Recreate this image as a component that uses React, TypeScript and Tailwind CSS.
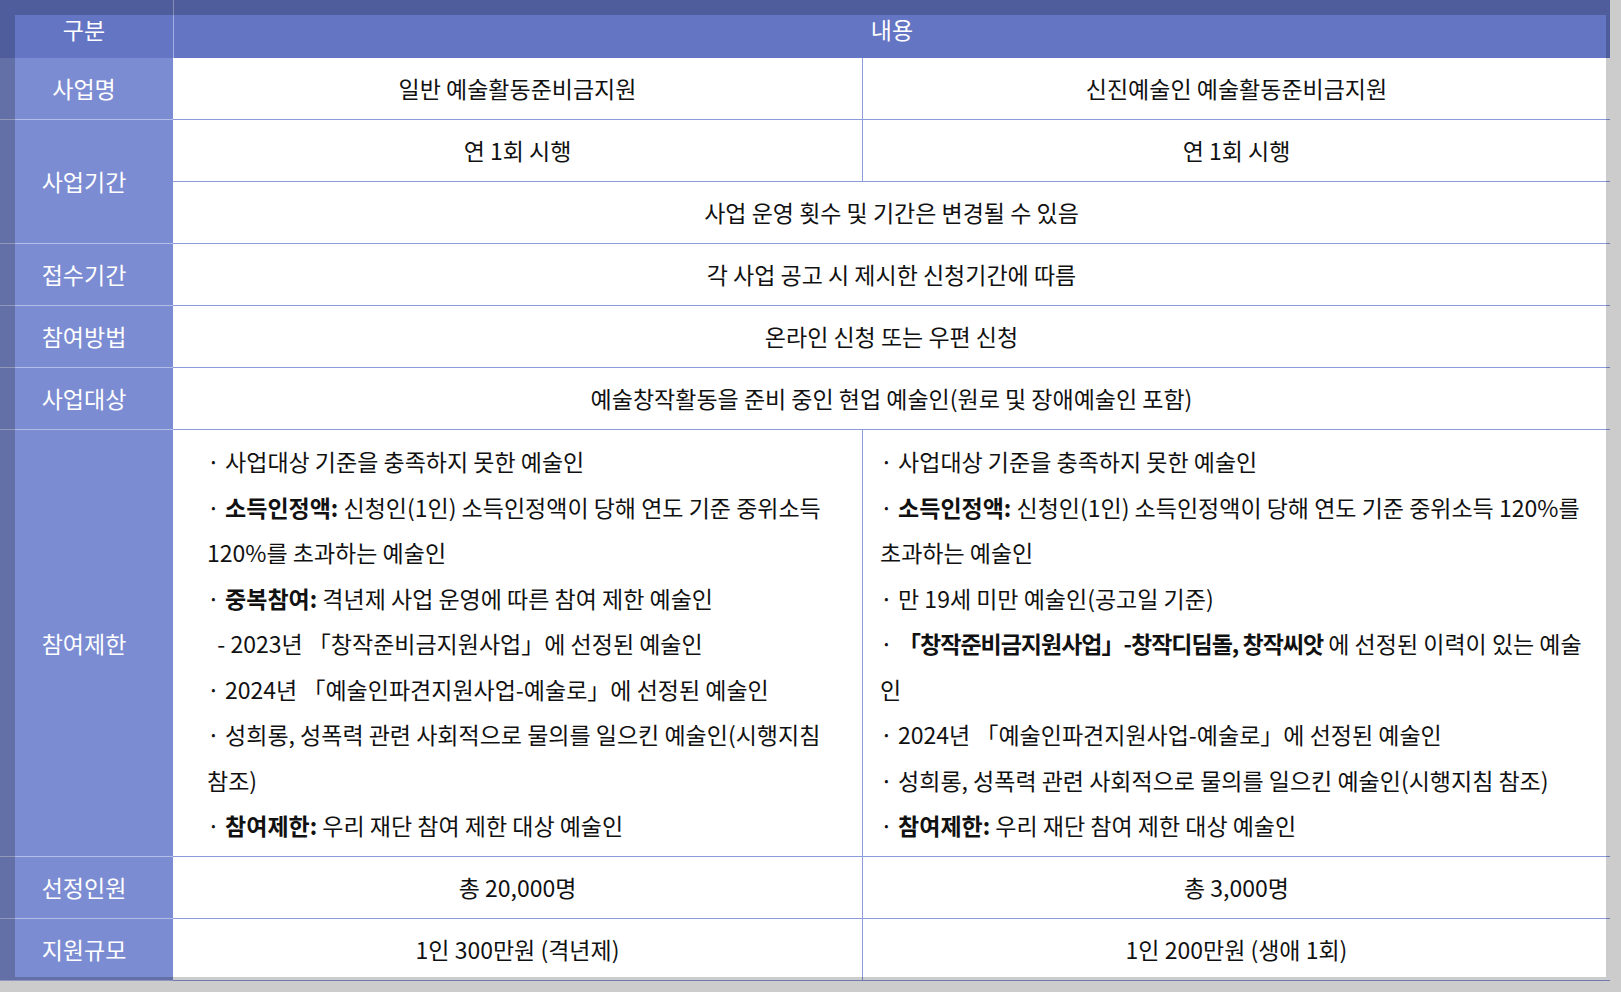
import React from "react";

const LINE = "border-[#8c9bdb]";

function Label({ children, className = "" }: { children: React.ReactNode; className?: string }) {
  return (
    <div
      className={`flex items-center justify-center border-b border-[#b4bdea] bg-[#7c8cd2] pr-[5px] text-white ${className}`}
    >
      {children}
    </div>
  );
}

function Cell({ children, className = "" }: { children: React.ReactNode; className?: string }) {
  return (
    <div className={`flex items-center justify-center border-b ${LINE} bg-white text-[#111] ${className}`}>
      {children}
    </div>
  );
}

const LEFT_LIMITS: React.ReactNode[] = [
  <>· 사업대상 기준을 충족하지 못한 예술인</>,
  <>
    · <b>소득인정액:</b> 신청인(1인) 소득인정액이 당해 연도 기준 중위소득 120%를 초과하는 예술인
  </>,
  <>
    · <b>중복참여:</b> 격년제 사업 운영에 따른 참여 제한 예술인
  </>,
  <>{"\u00a0\u00a0- 2023년 「창작준비금지원사업」에 선정된 예술인"}</>,
  <>· 2024년 「예술인파견지원사업-예술로」에 선정된 예술인</>,
  <>· 성희롱, 성폭력 관련 사회적으로 물의를 일으킨 예술인(시행지침 참조)</>,
  <>
    · <b>참여제한:</b> 우리 재단 참여 제한 대상 예술인
  </>,
];

const RIGHT_LIMITS: React.ReactNode[] = [
  <>· 사업대상 기준을 충족하지 못한 예술인</>,
  <>
    · <b>소득인정액:</b> 신청인(1인) 소득인정액이 당해 연도 기준 중위소득 120%를 초과하는 예술인
  </>,
  <>· 만 19세 미만 예술인(공고일 기준)</>,
  <>
    · <b className="tracking-[-1px]">「창작준비금지원사업」-창작디딤돌, 창작씨앗</b> 에 선정된 이력이 있는 예술인
  </>,
  <>· 2024년 「예술인파견지원사업-예술로」에 선정된 예술인</>,
  <>· 성희롱, 성폭력 관련 사회적으로 물의를 일으킨 예술인(시행지침 참조)</>,
  <>
    · <b>참여제한:</b> 우리 재단 참여 제한 대상 예술인
  </>,
];

export default function App() {
  return (
    <div
      className="relative h-[992px] w-[1621px] overflow-hidden bg-white text-[23px]"
      style={{ fontFamily: '"Noto Sans CJK KR", "Noto Sans", sans-serif' }}
    >
      <div
        className={`grid w-[1610px] grid-cols-[173px_690px_747px] grid-rows-[58px_62px_62px_62px_62px_62px_62px_427px_62px_62px] border-r ${LINE}`}
      >
        {/* header */}
        <div className="flex items-center justify-center bg-[#6475c3] pr-[5px] text-white">구분</div>
        <div className="col-span-2 flex items-center justify-center border-l border-[#a5b0e2] bg-[#6475c3] text-white">
          내용
        </div>

        {/* 사업명 */}
        <Label>사업명</Label>
        <Cell className="border-r">일반 예술활동준비금지원</Cell>
        <Cell>신진예술인 예술활동준비금지원</Cell>

        {/* 사업기간 */}
        <Label className="row-span-2">사업기간</Label>
        <Cell className="border-r">연 1회 시행</Cell>
        <Cell>연 1회 시행</Cell>
        <Cell className="col-span-2">사업 운영 횟수 및 기간은 변경될 수 있음</Cell>

        <Label>접수기간</Label>
        <Cell className="col-span-2">각 사업 공고 시 제시한 신청기간에 따름</Cell>

        <Label>참여방법</Label>
        <Cell className="col-span-2">온라인 신청 또는 우편 신청</Cell>

        <Label>사업대상</Label>
        <Cell className="col-span-2">예술창작활동을 준비 중인 현업 예술인(원로 및 장애예술인 포함)</Cell>

        {/* 참여제한 */}
        <Label>참여제한</Label>
        <div className={`border-r border-b ${LINE} bg-white pt-[9px] pr-[17px] pl-[34px] leading-[45.5px] text-[#111]`}>
          {LEFT_LIMITS.map((item, i) => (
            <div key={i}>{item}</div>
          ))}
        </div>
        <div className={`border-b ${LINE} bg-white pt-[9px] pr-[17px] pl-[17px] leading-[45.5px] text-[#111]`}>
          {RIGHT_LIMITS.map((item, i) => (
            <div key={i}>{item}</div>
          ))}
        </div>

        <Label>선정인원</Label>
        <Cell className="border-r">총 20,000명</Cell>
        <Cell>총 3,000명</Cell>

        <Label>지원규모</Label>
        <Cell className="border-r">1인 300만원 (격년제)</Cell>
        <Cell>1인 200만원 (생애 1회)</Cell>
      </div>

      {/* dimmed frame over the view */}
      <div className="pointer-events-none absolute inset-0 border-[15px] border-black/20" />
    </div>
  );
}
